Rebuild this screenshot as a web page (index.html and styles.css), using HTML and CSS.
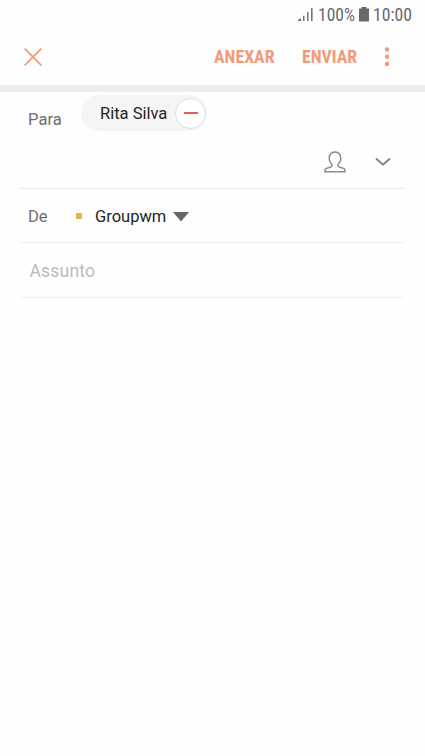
FILE: index.html
```html
<!DOCTYPE html>
<html lang="pt">
<head>
<meta charset="utf-8">
<title>Nova mensagem</title>
<link rel="stylesheet" href="styles.css">
</head>
<body>
<header class="status">
  <svg class="signal" width="16" height="15" viewBox="0 0 16 15"><path d="M0 14V13L3 11V14zM5 8.7h1.5V14H5zM9 5h1.5v9H9zM13 1h1.6v13H13z" fill="#777"/></svg>
  <svg class="pct" width="38" height="22"><text x="0" y="18" textLength="37" lengthAdjust="spacingAndGlyphs">100%</text></svg>
  <svg class="battery" width="10" height="15" viewBox="0 0 10 15"><path d="M2.5 0h5v1.6H10V14.5H0V1.6h2.5z" fill="#696969"/></svg>
  <svg class="clock" width="40" height="22"><text x="0" y="18" textLength="39" lengthAdjust="spacingAndGlyphs">10:00</text></svg>
</header>
<nav class="toolbar">
  <svg class="close" width="18" height="18" viewBox="0 0 18 18"><path d="M.7.7l16.6 16.6M17.3.7L.7 17.3" stroke="#f29a77" stroke-width="1.7"/></svg>
  <svg class="attach" width="61" height="22"><text x="0" y="17" textLength="60.5" lengthAdjust="spacingAndGlyphs">ANEXAR</text></svg>
  <svg class="send" width="56" height="22"><text x="0" y="17" textLength="55" lengthAdjust="spacingAndGlyphs">ENVIAR</text></svg>
  <svg class="more" width="6" height="20" viewBox="0 0 6 20"><g fill="#f29a77"><circle cx="3" cy="2.5" r="2.2"/><circle cx="3" cy="9.8" r="2.2"/><circle cx="3" cy="17" r="2.2"/></g></svg>
</nav>
<main class="form">
  <section class="recipients">
    <div class="to">
      <span class="label para">Para</span>
      <div class="chip"><span class="name">Rita Silva</span><span class="remove"><i class="minus"></i></span></div>
    </div>
    <div class="actions">
      <svg width="22" height="22" viewBox="0 0 22 22" fill="none" stroke="#8b8b8b" stroke-width="1.5"><path d="M.9 20.8C.7 17.6 2.3 17.1 5.4 16.4C8.6 15.7 8.9 14.2 7.2 12.4C5.9 11 5.2 10.3 5.2 7.8C5.2 3.5 7.3 1 11 1S16.8 3.5 16.8 7.8C16.8 10.3 16.1 11 14.8 12.4C13.1 14.2 13.4 15.7 16.6 16.4C19.7 17.1 21.3 17.6 21.1 20.8Z"/></svg>
      <svg class="chevron" width="16" height="10" viewBox="0 0 16 10"><path d="M1 1.5l7 6.2 7-6.2" fill="none" stroke="#858585" stroke-width="1.9"/></svg>
    </div>
  </section>
  <section class="row">
    <span class="label de">De</span>
    <i class="marker"></i>
    <span class="account">Groupwm</span>
    <svg class="caret" width="16" height="10" viewBox="0 0 16 10"><path d="M0 0h16L8 9.5z" fill="#666"/></svg>
  </section>
  <section class="row subject"><span>Assunto</span></section>
</main>
</body>
</html>
```
FILE: styles.css
```css
* { box-sizing: border-box; }
body { margin: 0; width: 425px; height: 756px; background: #fefefe; overflow: hidden; font: 16.5px/20px Roboto, sans-serif; color: #252525; }
svg { display: block; flex: none; overflow: visible; }
.status { display: flex; height: 29px; padding: 3px 0 0 298px; font-family: "Roboto Condensed", Roboto, sans-serif; font-size: 18px; }
.status text { fill: #696969; }
.signal { margin-top: 4px; margin-right: 4px; }
.battery { margin: 4px 4.5px 0 2.5px; }
.toolbar { display: flex; height: 56px; padding: 17px 0 0 24px; font-family: "Roboto Condensed", Roboto, sans-serif; font-size: 17.5px; font-weight: 700; }
.toolbar text { fill: #f29a77; }
.close { margin-top: 2px; }
.attach { margin-left: 171.5px; }
.send { margin-left: 27.5px; }
.more { margin: 1px 0 0 26px; }
.form { border-top: 7px solid #ededed; padding: 0 21px 0 20px; }
.recipients { height: 97px; border-bottom: 1px solid #eaeaea; }
.to { display: flex; height: 59px; padding: 3px 0 0 8px; }
.label { color: #6d6d6d; }
.para { width: 53px; padding-top: 15px; letter-spacing: .1px; }
.chip { display: flex; align-items: center; width: 126px; height: 36px; padding-left: 19px; border-radius: 18px; background: #f5f5f5; }
.name { width: 75px; padding-top: 2px; white-space: nowrap; }
.remove { display: grid; place-items: center; flex: none; width: 31px; height: 31px; border: 1px solid #dedede; border-radius: 50%; background: #fff; }
.minus { width: 14px; height: 2px; background: #e05c5c; }
.actions { display: flex; padding-left: 304px; }
.chevron { margin: 6px 0 0 28.5px; }
.row { display: flex; align-items: center; height: 54px; padding-left: 8px; border-bottom: 1px solid #eee; }
.de { width: 48px; padding-top: 2px; }
.marker { flex: none; width: 6px; height: 6px; background: #e9ad50; }
.account { flex: none; width: 91px; padding: 2px 0 0 13px; }
.caret { margin-top: 2px; }
.subject { height: 55px; padding: 2px 0 0 9.5px; font-size: 17.5px; letter-spacing: .2px; color: #bababa; }
```
